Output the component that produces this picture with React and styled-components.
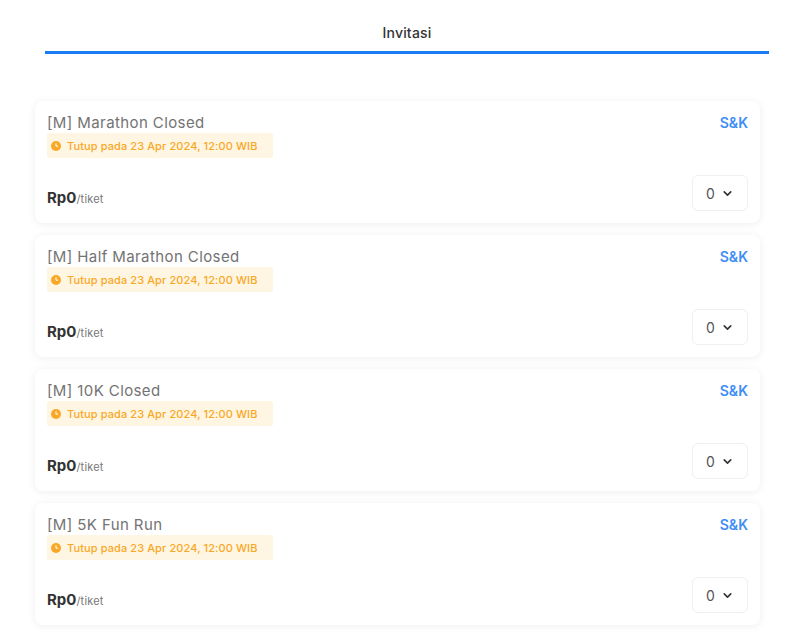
import React from 'react';
import styled, { createGlobalStyle } from 'styled-components';
import { ChevronDown } from 'lucide-react';

const GlobalStyle = createGlobalStyle`
  body {
    margin: 0;
    background: #fff;
    font-family: 'Inter', 'Noto Sans', sans-serif;
  }
`;

const tickets = [
  { id: 1, name: '[M] Marathon Closed' },
  { id: 2, name: '[M] Half Marathon Closed' },
  { id: 3, name: '[M] 10K Closed' },
  { id: 4, name: '[M] 5K Fun Run' },
];

function App() {
  return (
    <Page>
      <GlobalStyle />
      <Tabs>
        <Tab>Invitasi</Tab>
      </Tabs>
      <List>
        {tickets.map((ticket) => (
          <Card key={ticket.id}>
            <TopRow>
              <Info>
                <Title>{ticket.name}</Title>
                <Badge>
                  <ClockDot />
                  Tutup pada 23 Apr 2024, 12:00 WIB
                </Badge>
              </Info>
              <TermsLink>S&amp;K</TermsLink>
            </TopRow>
            <BottomRow>
              <Price>
                Rp0<Unit>/tiket</Unit>
              </Price>
              <QtySelect>
                0
                <ChevronDown size={13} strokeWidth={3} color='#333' />
              </QtySelect>
            </BottomRow>
          </Card>
        ))}
      </List>
    </Page>
  );
}

function ClockDot() {
  return (
    <svg width='10' height='10' viewBox='0 0 10 10'>
      <circle cx='5' cy='5' r='5' fill='#f9a825' />
      <path d='M5 2.6V5.2H6.8' stroke='#fff' strokeWidth='1' fill='none' strokeLinecap='round' />
    </svg>
  );
}

const Page = styled.div`
  padding-top: 16px;
  padding-bottom: 20px;
`;

const Tabs = styled.div`
  margin: 0 25px 0 45px;
  border-bottom: 3px solid #1a7cf5;
  display: flex;
  justify-content: center;
`;

const Tab = styled.div`
  font-size: 14px;
  font-weight: 500;
  color: #333;
  letter-spacing: 0.2px;
  padding: 8px 0 10px;
`;

const List = styled.div`
  margin: 47px 34px 0 35px;
  display: flex;
  flex-direction: column;
  gap: 12px;
`;

const Card = styled.div`
  background: #fff;
  border-radius: 8px;
  box-shadow: 0 1px 8px rgba(0, 0, 0, 0.07);
  padding: 12px;
  display: flex;
  flex-direction: column;
  gap: 17px;
`;

const TopRow = styled.div`
  display: flex;
  justify-content: space-between;
  align-items: flex-start;
`;

const Info = styled.div`
  display: flex;
  flex-direction: column;
  align-items: flex-start;
`;

const Title = styled.div`
  font-size: 15px;
  line-height: 20px;
  letter-spacing: 0.4px;
  color: #737373;
`;

const Badge = styled.div`
  display: flex;
  align-items: center;
  gap: 6px;
  background: #fff5e3;
  color: #f9a825;
  font-size: 11px;
  font-weight: 500;
  letter-spacing: 0.1px;
  height: 25px;
  padding: 0 16px 0 4px;
  border-radius: 2px;
`;

const TermsLink = styled.a`
  font-size: 14px;
  font-weight: 600;
  color: #3d8ef5;
  line-height: 20px;
  cursor: pointer;
`;

const BottomRow = styled.div`
  display: flex;
  justify-content: space-between;
  align-items: center;
`;

const Price = styled.div`
  font-size: 15px;
  font-weight: 700;
  color: #333;
  padding-top: 8px;
`;

const Unit = styled.span`
  font-size: 11px;
  font-weight: 400;
  color: #777;
  letter-spacing: 0.2px;
`;

const QtySelect = styled.div`
  width: 56px;
  height: 36px;
  box-sizing: border-box;
  border: 1px solid #efefef;
  border-radius: 6px;
  display: flex;
  align-items: center;
  justify-content: center;
  gap: 6px;
  font-size: 14px;
  color: #555;
`;

export default App;
